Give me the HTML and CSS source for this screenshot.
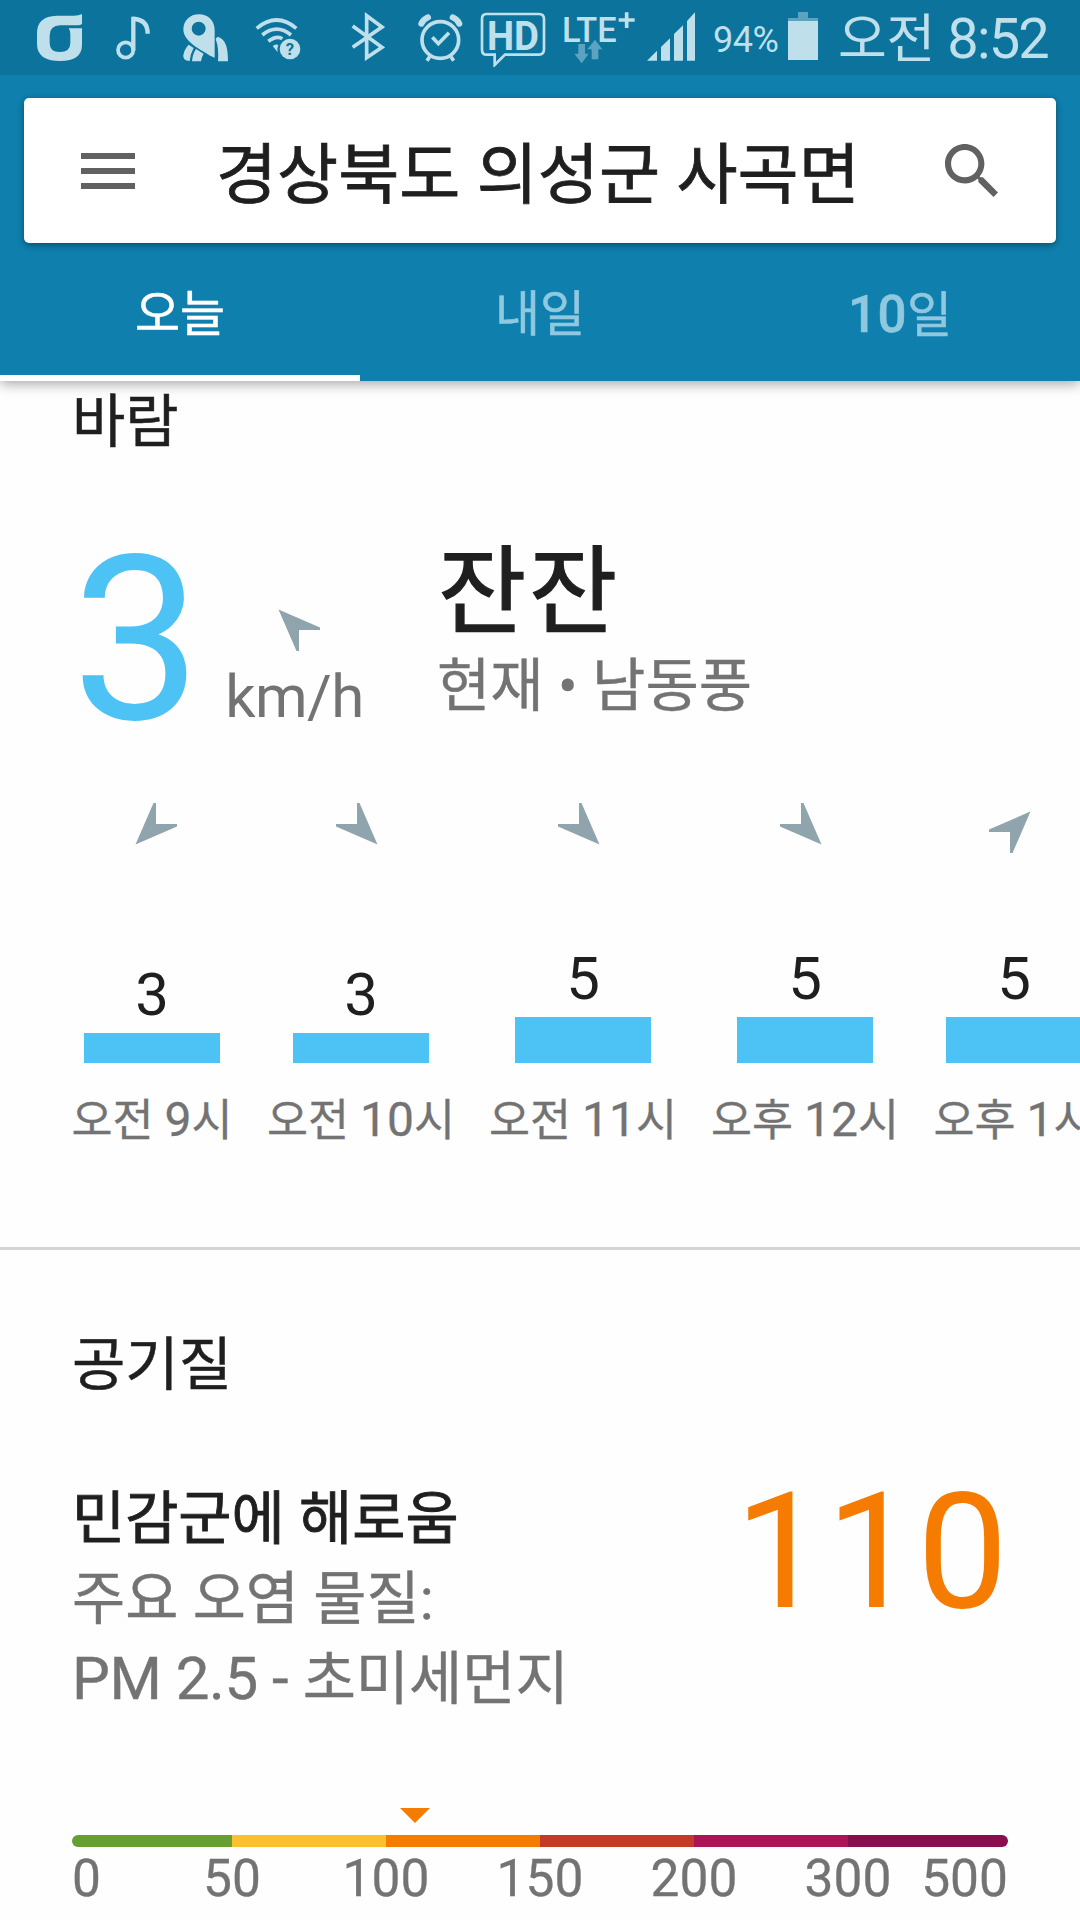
FILE: index.html
```html
<!DOCTYPE html>
<html lang="ko">
<head>
    <meta charset="UTF-8">
    <title>날씨</title>
    <link rel="stylesheet" href="styles.css">
</head>
<body>

    <header class="header">
        <div class="status">
            <svg class="icon-app" width="45" height="47" viewBox="111 43 135 141">
                <path fill-rule="evenodd" d="M170 48H222Q236 48 246 43V73Q242 77 232 77H181Q149 78 149 108V130Q149 157 179 157Q211 157 211 130V104Q211 93 206 86H246V135Q246 184 180 184Q111 184 111 133V100Q111 50 170 48Z"/>
            </svg>
            <svg class="icon-note" width="34" height="44" viewBox="349 48 102 132">
                <g fill="none">
                    <circle cx="378" cy="150" r="23" stroke-width="11"/>
                    <path d="M401 152V50" stroke-width="13"/>
                    <path d="M401 57Q444 58 444 101" stroke-width="13"/>
                </g>
            </svg>
            <svg class="icon-map" width="47" height="48" viewBox="545 41 141 144">
                <path fill-rule="evenodd" d="M596 42C624 42 643 62 643 90V172L631 167C606 150 550 125 549 88C549 60 569 42 596 42ZM595 64A21 21 0 1 0 595 106A21 21 0 1 0 595 64Z"/>
                <path d="M651 109C676 115 683 140 683 183H653Q656 140 646 117ZM565 133L580 143Q570 160 568 182Q546 181 549 164Q552 147 565 133ZM587 146L610 160Q604 169 602 183H575Q577 161 587 146Z"/>
            </svg>
            <svg class="icon-wifi" width="46" height="43" viewBox="764 50 138 129">
                <g fill="none" stroke-width="11">
                    <path d="M769 84Q829 34 888 84"/>
                    <path d="M786 104Q829 69 872 104"/>
                    <path d="M804 123Q829 104 846 115"/>
                </g>
                <path d="M817 137Q828 130 834 134Q829 146 832 156Z"/>
                <circle cx="869" cy="146" r="31"/>
                <text class="wifi-mark" x="869" y="164">?</text>
            </svg>
            <svg class="icon-bluetooth" width="34" height="49" viewBox="35 37 102 147">
                <path d="M40 79L128 143L82 174V48L128 82L40 143" fill="none" stroke-width="11"/>
            </svg>
            <svg class="icon-alarm" width="45" height="49" viewBox="233 38 135 147">
                <g fill="none" stroke-width="11">
                    <circle cx="300" cy="119" r="55"/>
                    <path d="M276 111L294 130L326 97"/>
                    <path d="M268 169L260 181M332 169L340 181"/>
                    <path d="M243 70Q249 57 263 51M337 51Q351 57 357 70" stroke-width="18" stroke-linecap="round"/>
                </g>
            </svg>
            <svg class="icon-hd" width="66" height="55" viewBox="421 37 198 165">
                <path d="M440 43H598Q613 43 613 58V149Q613 165 598 165H496L465 196V165H441Q427 165 427 150V58Q427 43 440 43Z" fill="none" stroke-width="8"/>
                <text class="hd-text" x="520" y="150" textLength="156" lengthAdjust="spacingAndGlyphs">HD</text>
            </svg>
            <svg class="icon-lte" width="74" height="54" viewBox="668 30 222 162">
                <text class="lte-text" x="668" y="125" textLength="164" lengthAdjust="spacingAndGlyphs">LTE</text>
                <path d="M862 37V84M838 60H886" stroke-width="11"/>
                <path class="dim" d="M717 132H737V161H748L727 190L705 161H717ZM767 119L789 148H777V178H757V148H744Z"/>
            </svg>
            <svg class="icon-signal" width="48" height="49" viewBox="921 37 144 147">
                <path d="M921 183L951 153V183ZM963 142L990 116V183H963ZM1002 103L1029 77V183H1002ZM1041 64L1065 38V183H1041Z"/>
            </svg>
            <span class="battery-level">94%</span>
            <svg class="icon-battery" width="30" height="48" viewBox="0 0 30 48">
                <path class="dim" d="M10 0H20V6H30V9H0V6H10Z"/>
                <path d="M0 9H30V48H0Z"/>
            </svg>
            <span class="clock"><span class="ampm">오전</span> 8:52</span>
        </div>

        <div class="search">
            <svg class="menu" width="54" height="36" viewBox="0 0 54 36">
                <path d="M0 0H54V6H0ZM0 15H54V21H0ZM0 30H54V36H0Z"/>
            </svg>
            <span class="place">경상북도 의성군 사곡면</span>
            <svg class="lens" width="53" height="53" viewBox="3 3 17.49 17.49">
                <path d="M15.5 14h-.79l-.28-.27C15.41 12.59 16 11.11 16 9.5 16 5.91 13.09 3 9.5 3S3 5.91 3 9.5 5.91 16 9.5 16c1.61 0 3.09-.59 4.23-1.57l.27.28v.79l5 4.99L20.49 19l-4.99-5zm-6 0C7.01 14 5 11.99 5 9.5S7.01 5 9.5 5 14 7.01 14 9.5 11.99 14 9.5 14z"/>
            </svg>
        </div>

        <nav class="tabs">
            <span class="tab active">오늘</span>
            <span class="tab">내일</span>
            <span class="tab"><span class="tab-number">10</span>일</span>
        </nav>
    </header>

    <section class="wind">
        <h2>바람</h2>
        <div class="now">
            <span class="speed">3</span>
            <div class="unit">
                <svg class="arrow up-left" viewBox="-30 -30 60 60"><path d="M16.5-16.5L-25 1.5V4H-4V25H-1.5Z"/></svg>
                <span>km/h</span>
            </div>
            <div class="summary">
                <p class="wind-name">잔잔</p>
                <p class="wind-from">현재 <span class="dot">•</span> 남동풍</p>
            </div>
        </div>

        <div class="hours">
            <div class="hour short">
                <svg class="arrow down-left" viewBox="-30 -30 60 60"><path d="M16.5-16.5L-25 1.5V4H-4V25H-1.5Z"/></svg>
                <div class="column"><span>3</span><div class="bar" style="height: 30px"></div></div>
                <p>오전 <b>9</b>시</p>
            </div>
            <div class="hour">
                <svg class="arrow down-right" viewBox="-30 -30 60 60"><path d="M16.5-16.5L-25 1.5V4H-4V25H-1.5Z"/></svg>
                <div class="column"><span>3</span><div class="bar" style="height: 30px"></div></div>
                <p>오전 <b>10</b>시</p>
            </div>
            <div class="hour">
                <svg class="arrow down-right" viewBox="-30 -30 60 60"><path d="M16.5-16.5L-25 1.5V4H-4V25H-1.5Z"/></svg>
                <div class="column"><span>5</span><div class="bar" style="height: 46px"></div></div>
                <p>오전 <b>11</b>시</p>
            </div>
            <div class="hour">
                <svg class="arrow down-right" viewBox="-30 -30 60 60"><path d="M16.5-16.5L-25 1.5V4H-4V25H-1.5Z"/></svg>
                <div class="column"><span>5</span><div class="bar" style="height: 46px"></div></div>
                <p>오후 <b>12</b>시</p>
            </div>
            <div class="hour short">
                <svg class="arrow" viewBox="-30 -30 60 60"><path d="M16.5-16.5L-25 1.5V4H-4V25H-1.5Z"/></svg>
                <div class="column"><span>5</span><div class="bar" style="height: 46px"></div></div>
                <p>오후 <b>1</b>시</p>
            </div>
        </div>
    </section>

    <section class="air">
        <h2>공기질</h2>
        <div class="air-row">
            <div class="air-text">
                <p class="air-level">민감군에 해로움</p>
                <p>주요 오염 물질:</p>
                <p><span class="latin">PM 2.5 - </span>초미세먼지</p>
            </div>
            <span class="air-index">110</span>
        </div>
        <div class="gauge">
            <svg class="pointer" width="30" height="15" viewBox="0 0 30 15"><path d="M0 0H30L15 15Z"/></svg>
            <div class="scale">
                <i class="good"></i><i class="moderate"></i><i class="sensitive"></i><i class="unhealthy"></i><i class="very"></i><i class="hazardous"></i>
            </div>
            <div class="ticks">
                <span>0</span><span>50</span><span>100</span><span>150</span><span>200</span><span>300</span><span>500</span>
            </div>
        </div>
    </section>

</body>
</html>
```

FILE: styles.css
```css
* { box-sizing: border-box; }
body { margin: 0; width: 1080px; height: 1920px; overflow: hidden; background: #fefefe; color: #1f1f1f; font-family: Roboto, "Noto Sans CJK KR", sans-serif; }
h2, p { margin: 0; font-weight: 400; }
svg { display: block; flex: none; }

/* header */
.header { position: relative; height: 381px; background: #0f7fae; box-shadow: 0 3px 12px rgba(0, 0, 0, 0.35); }
.status { display: flex; align-items: flex-start; height: 75px; padding-left: 37px; background: #0c739d; color: #bfe0eb; white-space: nowrap; }
.status svg { fill: #bfe0eb; }
.status svg [stroke-width] { stroke: #bfe0eb; }
.status svg g[fill="none"], .status svg path[fill="none"] { fill: none; }
.status .dim { fill: #5ba3c0; }
.icon-app { margin-top: 14px; }
.icon-note { margin: 16px 0 0 34px; }
.icon-map { margin: 14px 0 0 32px; }
.icon-wifi { margin: 17px 0 0 26px; }
.icon-bluetooth { margin: 12px 0 0 50px; }
.icon-alarm { margin: 13px 0 0 33px; }
.icon-hd { margin: 12px 0 0 17px; }
.icon-lte { margin: 10px 0 0 16px; }
.icon-signal { margin: 12px 0 0 11px; }
.icon-battery { margin: 12px 0 0 8px; }
.status .wifi-mark { fill: #0c739d; font-size: 50px; font-weight: 700; text-anchor: middle; }
.hd-text { font-size: 122px; font-weight: 700; text-anchor: middle; }
.lte-text { font-size: 104px; font-weight: 500; }
.battery-level { width: 67px; margin-left: 18px; font-size: 36px; line-height: 80px; letter-spacing: -0.5px; }
.clock { margin-left: 20px; font-size: 56px; line-height: 78px; letter-spacing: -1.8px; }
.ampm { font-size: 53px; letter-spacing: -0.2px; }

.search { display: flex; align-items: center; height: 145px; margin: 23px 24px 0 24px; padding: 0 58px 0 57px; background: #fff; border-radius: 5px; box-shadow: 0 2px 7px rgba(0, 0, 0, 0.4); }
.menu { fill: #616161; }
.place { flex: 1; margin-left: 81px; padding-top: 9px; font-size: 66.4px; line-height: 136px; white-space: nowrap; -webkit-text-stroke: 0.8px; }
.lens { fill: #616161; }

.tabs { display: grid; grid-template-columns: repeat(3, 1fr); height: 138px; }
.tab { padding-top: 25px; font-size: 49px; line-height: 94px; text-align: center; color: #8fc8df; border-bottom: 6px solid transparent; -webkit-text-stroke: 0.5px; }
.tab.active { color: #fff; border-color: #fff; }
.tab-number { font-size: 51px; font-weight: 500; letter-spacing: 0.5px; }

/* wind */
h2 { font-size: 58px; line-height: 70px; -webkit-text-stroke: 0.5px; }
.wind { height: 869px; padding: 6px 0 0 72px; border-bottom: 3px solid #d4d4d4; overflow: hidden; }
.now { display: flex; height: 263px; margin-top: 78px; }
.speed { width: 129px; margin-top: 6px; font-size: 230px; line-height: 200px; color: #4cc3f4; }
.unit { display: flex; flex-direction: column; align-items: center; gap: 11px; width: 139px; margin: 61px 0 0 24px; font-size: 60px; line-height: 60px; letter-spacing: -0.6px; color: #737373; }
.summary { margin-left: 73px; }
.wind-name { padding: 5px 0 0 1px; font-size: 96px; line-height: 105px; letter-spacing: 2.6px; -webkit-text-stroke: 1.3px; }
.wind-from { margin-top: 6px; font-size: 58px; line-height: 70px; color: #737373; -webkit-text-stroke: 0.4px; }
.arrow { width: 60px; height: 60px; fill: #90a4ae; }
.down-right { transform: rotate(90deg); }
.down-left { transform: rotate(180deg); }
.up-left { transform: rotate(270deg); }

.hours { display: flex; gap: 36px; }
.hour { display: flex; flex: none; flex-direction: column; align-items: center; width: 186px; }
.hour.short { width: 160px; }
.column { display: flex; flex-direction: column; align-items: center; justify-content: flex-end; height: 205px; }
.column span { margin-bottom: 8px; font-size: 60px; line-height: 60px; }
.bar { width: 136px; background: #4cc3f4; }
.hour p { margin-top: 27px; font-size: 44.6px; line-height: 60px; color: #737373; white-space: nowrap; -webkit-text-stroke: 0.3px; }
.hour b { font-size: 48px; font-weight: 400; }

/* air quality */
.air { padding: 80px 72px 0; }
.air-row { display: flex; justify-content: space-between; margin-top: 79px; }
.air-text { font-size: 57.8px; line-height: 80px; color: #737373; -webkit-text-stroke: 0.4px; }
.air-text .air-level { color: #1f1f1f; -webkit-text-stroke: 0.9px; }
.latin { font-size: 60px; letter-spacing: -0.45px; white-space: pre; }
.air-index { margin-top: -7px; font-size: 162px; line-height: 160px; color: #f57c00; -webkit-text-stroke: 0; }
.gauge { margin-top: 89px; }
.pointer { margin-left: 328px; fill: #f57c00; }
.scale { display: grid; grid-template-columns: 160px repeat(4, 154px) 160px; height: 12px; margin-top: 12px; border-radius: 6px; overflow: hidden; }
.good { background: #66a033; }
.moderate { background: #fbc02d; }
.sensitive { background: #f57c00; }
.unhealthy { background: #c53929; }
.very { background: #ad1457; }
.hazardous { background: #880e4f; }
.ticks { display: grid; grid-template-columns: 83px repeat(5, 154px) 83px; margin-top: 7px; font-size: 51.5px; line-height: 50px; color: #737373; -webkit-text-stroke: 0.3px; }
.ticks span { display: flex; justify-content: center; }
.ticks span:first-child { justify-content: flex-start; }
.ticks span:last-child { justify-content: flex-end; }
```
